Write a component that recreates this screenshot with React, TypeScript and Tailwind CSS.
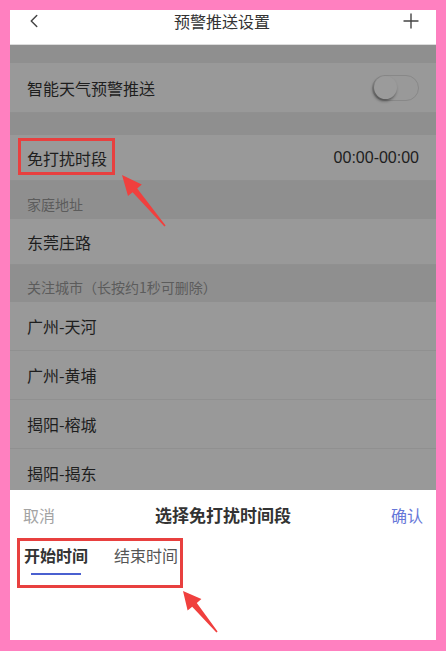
import { ChevronLeft, Plus } from 'lucide-react';

const font = { fontFamily: '"Noto Sans CJK SC", "Noto Sans", sans-serif' };

const cities = ['广州-天河', '广州-黄埔', '揭阳-榕城', '揭阳-揭东'];

function Row({ label, right, h }: { label: string; right?: React.ReactNode; h: string }) {
  return (
    <div className={`${h} flex items-center justify-between px-[17px] bg-[#999999] border-b border-[#909090] shrink-0`}>
      <span className="text-[16px] leading-[22px] text-[#1e1e1e]">{label}</span>
      {right}
    </div>
  );
}

function SectionTitle({ label, h }: { label: string; h: string }) {
  return (
    <div className={`${h} flex items-end px-[17px] pb-[5px] bg-[#8f8f8f] shrink-0`}>
      <span className="text-[14px] leading-[20px] text-[#5c5c5c]">{label}</span>
    </div>
  );
}

export default function App() {
  return (
    <div className="w-[446px] h-[651px] bg-[#ff80c0] pt-[10px] px-[10px]" style={font}>
      <div className="relative w-[426px] h-[630px] flex flex-col overflow-hidden bg-white">
        {/* Top bar */}
        <div className="h-[35px] shrink-0 flex items-start justify-between px-[13px] bg-white border-b border-[#dcdcdc]">
          <ChevronLeft className="w-[22px] h-[22px] mt-[0px] text-[#444]" strokeWidth={1.6} />
          <span className="text-[16px] leading-[23px] text-[#333]">预警推送设置</span>
          <Plus className="w-[24px] h-[24px] -mt-[1px] text-[#444]" strokeWidth={1.4} />
        </div>

        {/* Dimmed settings list */}
        <div className="flex-1 flex flex-col overflow-hidden bg-[#8f8f8f]">
          <div className="h-[18px] shrink-0" />
          <Row
            label="智能天气预警推送"
            h="h-[50px]"
            right={
              <div className="w-[47px] h-[26px] rounded-full border border-[#888] bg-[#999] flex items-center p-[1px]">
                <div className="w-[23px] h-[23px] rounded-full bg-[#9b9b9b] shadow-[-1px_2px_3px_rgba(0,0,0,0.45)]" />
              </div>
            }
          />
          <div className="h-[22px] shrink-0" />
          <Row
            label="免打扰时段"
            h="h-[46px]"
            right={<span className="text-[16px] leading-[22px] text-[#1e1e1e]" style={{ fontFamily: '"Liberation Sans", sans-serif' }}>00:00-00:00</span>}
          />
          <SectionTitle label="家庭地址" h="h-[38px]" />
          <Row label="东莞庄路" h="h-[46px]" />
          <SectionTitle label="关注城市（长按约1秒可删除）" h="h-[37px]" />
          {cities.map((c) => (
            <Row key={c} label={c} h="h-[49px]" />
          ))}
        </div>

        {/* Bottom sheet */}
        <div className="h-[150px] shrink-0 bg-white flex flex-col">
          <div className="flex items-center justify-between px-[13px] pt-[14px]">
            <span className="text-[16px] leading-[22px] text-[#a3a3a3]">取消</span>
            <span className="text-[17px] leading-[22px] font-bold text-[#333]">选择免打扰时间段</span>
            <span className="text-[16px] leading-[22px] text-[#6677d8]">确认</span>
          </div>
          <div className="flex gap-[26px] px-[14px] pt-[18px]">
            <div className="flex flex-col items-center">
              <span className="text-[16px] leading-[22px] font-bold text-[#333]">开始时间</span>
              <div className="mt-[7px] w-[50px] h-[2px] bg-[#4a60d0]" />
            </div>
            <span className="text-[16px] leading-[22px] text-[#555]">结束时间</span>
          </div>
        </div>

        {/* Red annotation boxes */}
        <div className="absolute left-[8px] top-[128px] w-[97px] h-[37px] border-[3px] border-[#e8403f] pointer-events-none" />
        <div className="absolute left-[7px] top-[528px] w-[166px] h-[50px] border-[3px] border-[#e8403f] pointer-events-none" />

        {/* Red arrows */}
        <svg className="absolute left-0 top-0 pointer-events-none" width="426" height="630" viewBox="10 10 426 630">
          <polygon
            fill="#f0403e"
            points="122,175 141.8,184.5 137.2,188.4 165.6,225.5 164.4,226.5 132.6,192.2 128,196.1"
          />
          <polygon
            fill="#f0403e"
            points="183,591 201.4,599.1 196.8,602.9 217.6,631.5 216.4,632.5 192.2,606.7 187.6,610.5"
          />
        </svg>
      </div>
    </div>
  );
}
